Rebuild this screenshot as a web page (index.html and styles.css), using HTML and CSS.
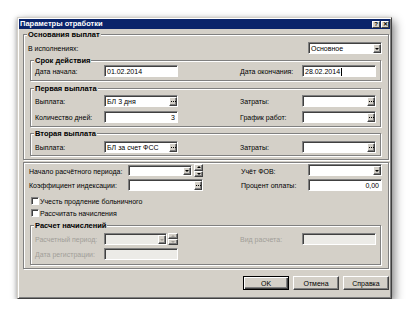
FILE: index.html
```html
<!DOCTYPE html>
<html lang="ru">
<head>
<meta charset="utf-8">
<link rel="stylesheet" href="styles.css">
</head>
<body>
<div class="dialog">
  <div class="titlebar">
    <span class="title">Параметры отработки</span>
    <span class="tbtns"><span class="tbtn">?</span><span class="tbtn">✕</span></span>
  </div>
  <div class="body">
    <fieldset class="grp outer">
      <legend>Основания выплат</legend>
      <div class="row-top">
        <span class="lbl">В исполнениях:</span>
        <div class="edit combo w74"><span class="val">Основное</span><span class="arr"><i class="tri-d"></i></span></div>
      </div>
      <fieldset class="grp inner g-srok">
        <legend>Срок действия</legend>
        <div class="grid-in">
          <span class="lbl">Дата начала:</span>
          <div class="edit"><span class="val">01.02.2014</span></div>
          <span></span>
          <span class="lbl">Дата окончания:</span>
          <div class="edit"><span class="val caretv">28.02.2014<span class="caret"></span></span></div>
        </div>
      </fieldset>
      <fieldset class="grp inner g-first">
        <legend>Первая выплата</legend>
        <div class="grid-in rows2">
          <span class="lbl">Выплата:</span>
          <div class="edit"><span class="val">БЛ 3 дня</span><span class="dots"><i class="d3"></i></span></div>
          <span></span>
          <span class="lbl">Затраты:</span>
          <div class="edit"><span class="val"></span><span class="dots"><i class="d3"></i></span></div>
          <span class="lbl">Количество дней:</span>
          <div class="edit num"><span class="val">3</span></div>
          <span></span>
          <span class="lbl">График работ:</span>
          <div class="edit"><span class="val"></span><span class="dots"><i class="d3"></i></span></div>
        </div>
      </fieldset>
      <fieldset class="grp inner g-second">
        <legend>Вторая выплата</legend>
        <div class="grid-in">
          <span class="lbl">Выплата:</span>
          <div class="edit"><span class="val">БЛ за счет ФСС</span><span class="dots"><i class="d3"></i></span></div>
          <span></span>
          <span class="lbl">Затраты:</span>
          <div class="edit"><span class="val"></span><span class="dots"><i class="d3"></i></span></div>
        </div>
      </fieldset>
    </fieldset>

    <fieldset class="grp outer lower">
      <div class="grid-low">
        <span class="lbl">Начало расчётного периода:</span>
        <div class="cspin">
          <div class="edit combo"><span class="val"></span><span class="arr"><i class="tri-d"></i></span></div>
          <div class="spin"><span class="sb"><i class="tri-u"></i></span><span class="sb"><i class="tri-d"></i></span></div>
        </div>
        <span></span>
        <span class="lbl">Учёт ФОВ:</span>
        <div class="edit combo"><span class="val"></span><span class="arr"><i class="tri-d"></i></span></div>
      </div>
      <div class="grid-low r2">
        <span class="lbl">Коэффициент индексации:</span>
        <div class="edit"><span class="val"></span><span class="dots"><i class="d3"></i></span></div>
        <span></span>
        <span class="lbl">Процент оплаты:</span>
        <div class="edit num"><span class="val">0,00</span></div>
      </div>
      <label class="cb"><span class="box"></span><span>Учесть продление больничного</span></label>
      <label class="cb"><span class="box"></span><span>Рассчитать начисления</span></label>
      <fieldset class="grp inner g-calc">
        <legend>Расчет начислений</legend>
        <div class="grid-in rows2 dis">
          <span class="lbl">Расчетный период:</span>
          <div class="cspin small">
            <div class="edit combo"><span class="val"></span><span class="arr"><i class="tri-d"></i></span></div>
            <div class="spin"><span class="sb"><i class="tri-u"></i></span><span class="sb"><i class="tri-d"></i></span></div>
          </div>
          <span></span>
          <span class="lbl">Вид расчета:</span>
          <div class="edit"><span class="val"></span></div>
          <span class="lbl">Дата регистрации:</span>
          <div class="edit"><span class="val"></span></div>
          <span></span>
          <span></span>
          <span></span>
        </div>
      </fieldset>
    </fieldset>

    <div class="buttons">
      <button class="btn def">OK</button>
      <button class="btn">Отмена</button>
      <button class="btn">Справка</button>
    </div>
  </div>
</div>
</body>
</html>
```

FILE: styles.css
```css
* { box-sizing: border-box; }
html, body { margin: 0; background: #fff; }
body {
  font-family: "Liberation Sans", Arial, sans-serif;
  font-size: 7px;
  color: #000;
}
.dialog {
  margin: 17px 0 0 17px;
  width: 375px;
  height: 282px;
  background: #d4d0c8;
  border: 1px solid;
  border-color: #d4d0c8 #404040 #404040 #d4d0c8;
  box-shadow: inset 1px 1px #fff, inset -1px -1px #808080, 3px 4px 9px rgba(0,0,0,.45), -1px 1px 4px rgba(0,0,0,.2);
  padding: 1px;
  display: flex;
  flex-direction: column;
}
.titlebar {
  height: 10px;
  background: #0a246a;
  display: flex;
  align-items: center;
  justify-content: space-between;
  padding: 0 1px 0 1px;
}
.title {
  color: #fff;
  font-weight: bold;
  font-size: 7.5px;
  line-height: 10px;
}
.tbtns { display: flex; gap: 1px; }
.tbtn {
  width: 8px;
  height: 7px;
  background: #d4d0c8;
  border: 1px solid;
  border-color: #fff #404040 #404040 #fff;
  font-size: 6px;
  font-weight: bold;
  line-height: 5px;
  text-align: center;
}
.body {
  flex: 1;
  padding: 1px 1px 0 4px;
  display: flex;
  flex-direction: column;
}
.grp {
  margin: 0;
  min-width: 0;
  border: 1px solid #808080;
  box-shadow: inset 1px 1px #fff, 1px 1px #fff;
}
.grp legend {
  font-weight: bold;
  font-size: 7.5px;
  line-height: 9px;
  padding: 0 1px;
  margin-left: -1px;
  background: #d4d0c8;
}
.outer {
  padding: 3px 0 3px 4px;
}
.lower {
  margin-top: 2px;
  padding-top: 1px;
}
.inner {
  margin: 0 7px 0 2px;
  padding: 0 4px 3px 4px;
}
.g-srok { margin-top: 2px; }
.g-first { margin-top: 3px; padding-top: 2px; padding-bottom: 3px; }
.g-second { margin-top: 2px; padding-top: 3px; padding-bottom: 2px; }
.g-calc { margin-top: 2px; padding-top: 3px; padding-bottom: 4px; }

.row-top {
  display: flex;
  align-items: center;
  height: 12px;
}
.row-top .combo { margin-left: auto; margin-right: 6px; width: 74px; }

.lbl { white-space: nowrap; line-height: 12px; padding-top: 2px; }
.grid-in {
  display: grid;
  grid-template-columns: 69px 74px 62px 62px 74px;
  grid-auto-rows: 12px;
  align-items: center;
}
.grid-in.rows2 { row-gap: 4px; }
.g-calc .grid-in.rows2 { row-gap: 3px; }
.grid-low {
  display: grid;
  grid-template-columns: 100px 75px 37px 68px 74px;
  grid-auto-rows: 13px;
  align-items: center;
}
.grid-low .lbl { padding-left: 1px; }
.grid-low.r2 { margin-top: 2px; grid-auto-rows: 12px; }
.grid-low > .combo { height: 12px; align-self: start; }

.edit {
  height: 12px;
  background: #fff;
  border: 1px solid;
  border-color: #808080 #fff #fff #808080;
  box-shadow: inset 1px 1px #404040;
  padding: 1px 0 0 2px;
  display: flex;
  align-items: stretch;
  overflow: hidden;
  white-space: nowrap;
}
.edit .val { flex: 1; line-height: 10px; }
.edit.num .val { text-align: right; padding-right: 2px; }
.caretv { display: flex; align-items: center; }
.caret { width: 1px; height: 8px; background: #000; margin-left: 1px; }
.dots, .arr, .sb {
  background: #d4d0c8;
  border: 1px solid;
  border-color: #fff #404040 #404040 #fff;
  box-shadow: inset -1px -1px #808080;
}
.dots {
  width: 8px;
  display: flex;
  align-items: flex-end;
  justify-content: center;
  padding-bottom: 3px;
}
.d3 {
  display: block;
  width: 1px;
  height: 1px;
  background: #000;
  margin-right: 4px;
  box-shadow: 2px 0 #000, 4px 0 #000;
}
.arr {
  width: 8px;
  display: flex;
  align-items: center;
  justify-content: center;
}
.tri-d, .tri-u {
  display: block;
  width: 0;
  height: 0;
  border-left: 2px solid transparent;
  border-right: 2px solid transparent;
}
.tri-d { border-top: 2px solid #000; }
.tri-u { border-bottom: 2px solid #000; }

.cspin { display: flex; gap: 2px; height: 13px; }
.cspin .combo { width: 64px; height: 11px; margin-top: 1px; }
.spin { width: 9px; display: flex; flex-direction: column; }
.sb {
  flex: 1;
  display: flex;
  align-items: center;
  justify-content: center;
}
.cspin.small { gap: 1px; height: 12px; }
.cspin.small .combo { width: 63px; height: 12px; margin-top: 0; }
.cspin.small .spin { width: 10px; }

.cb {
  display: flex;
  align-items: center;
  height: 12px;
  gap: 1px;
}
.grid-low.r2 + .cb { margin-top: 4px; }
.cb .box {
  width: 8px;
  height: 8px;
  margin-left: 3px;
  background: #fff;
  border: 1px solid;
  border-color: #808080 #fff #fff #808080;
  box-shadow: inset 1px 1px #404040;
}

.dis .lbl { color: #a19e98; }
.dis .edit { background: #ecebe7; }
.dis .tri-d { border-top-color: #a19e98; }
.dis .tri-u { border-bottom-color: #a19e98; }

.buttons {
  margin-top: 7px;
  display: flex;
  justify-content: flex-end;
  gap: 4px;
}
.btn {
  width: 46px;
  height: 14px;
  margin: 0;
  padding: 0;
  font-family: "Liberation Sans", Arial, sans-serif;
  font-size: 7px;
  color: #000;
  background: #d4d0c8;
  border: 1px solid;
  border-color: #fff #404040 #404040 #fff;
  box-shadow: inset -1px -1px #808080;
}
.btn.def {
  border: 1px solid #000;
  box-shadow: inset 1px 1px #fff, inset -1px -1px #404040, inset -2px -2px #808080;
}
```
